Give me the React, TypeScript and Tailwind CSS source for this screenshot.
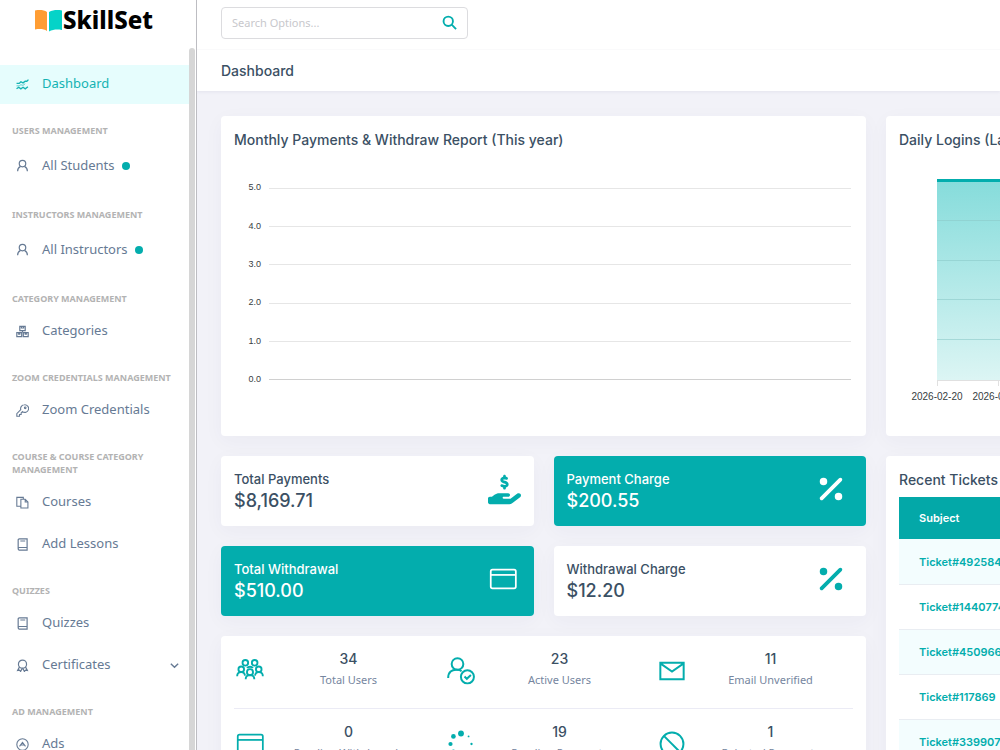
import type { ReactNode } from 'react'
import { FaHandHoldingDollar, FaPercent } from 'react-icons/fa6'

type IconProps = { children: ReactNode; size?: number; width?: number }

// all outline icons share a 24 unit grid
function Icon({ children, size = 13, width = 2 }: IconProps) {
  return (
    <svg
      width={size}
      height={size}
      viewBox="0 0 24 24"
      fill="none"
      stroke="currentColor"
      strokeWidth={width}
      className="shrink-0"
      aria-hidden="true"
    >
      {children}
    </svg>
  )
}

const icons = {
  dashboard: (
    <Icon width={2.4}>
      <path d="M1 10h5l3-3 4 2 4-3h3l3-3M1 20l4-3 4 3 4-3 4 3 5-4" />
      <path d="M1 14.500h5l3-2 4 1 4-3" strokeWidth="1.200" />
    </Icon>
  ),
  user: (
    <Icon width={2.2}>
      <circle cx="12" cy="8.500" r="6" />
      <path d="M3 22.500c0-5 2.500-7.500 5-8.500M21 22.500c0-5-2.500-7.500-5-8.500" />
    </Icon>
  ),
  categories: (
    <Icon width={2.2}>
      <path d="M7 2.500h10v8H7zM1.500 14h9v7.500h-9zM13.500 14h9v7.500h-9zM12 10.500V14M10 2.500v3h4v-3M5 14v3h2v-3M17 14v3h2v-3" />
    </Icon>
  ),
  key: (
    <Icon>
      <path d="M15.500 1.500a7 7 0 0 0-6.700 9L1.500 17.800v4.700h5v-3h3v-3l2.500-2.500a7 7 0 1 0 3.500-12.500z" />
      <circle cx="17" cy="7" r="1.500" />
    </Icon>
  ),
  courses: (
    <Icon>
      <path d="M9 19H1.500V2.500h12V6M9 6h8l5 5v11H9zM17 6v5h5" />
    </Icon>
  ),
  book: (
    <Icon width={2.2}>
      <path d="M4 19.500V3.500a2 2 0 0 1 2-2h14.500v21H6a3 3 0 0 1-2-3 2.500 2.500 0 0 1 2-2h14.500M8 5.500h9" />
    </Icon>
  ),
  certificate: (
    <Icon width={2.2}>
      <circle cx="12" cy="9.500" r="7.500" />
      <path d="M6.500 14.500L3 21l3.500-.5L8.500 23l3-6M17.500 14.500L21 21l-3.500-.5-2 2.500-3-6" />
    </Icon>
  ),
  ads: (
    <Icon>
      <circle cx="12" cy="12" r="10.500" />
      <path d="M6.500 15.500L12 8l5.500 7.500M9 13h6" />
    </Icon>
  ),
}

type MenuItem = { label: string; icon: keyof typeof icons; dot?: boolean; open?: boolean }

const menu: { title: string; items: MenuItem[] }[] = [
  { title: 'Users Management', items: [{ label: 'All Students', icon: 'user', dot: true }] },
  { title: 'Instructors Management', items: [{ label: 'All Instructors', icon: 'user', dot: true }] },
  { title: 'Category Management', items: [{ label: 'Categories', icon: 'categories' }] },
  { title: 'Zoom Credentials Management', items: [{ label: 'Zoom Credentials', icon: 'key' }] },
  {
    title: 'Course & Course Category Management',
    items: [
      { label: 'Courses', icon: 'courses' },
      { label: 'Add Lessons', icon: 'book' },
    ],
  },
  {
    title: 'Quizzes',
    items: [
      { label: 'Quizzes', icon: 'book' },
      { label: 'Certificates', icon: 'certificate', open: true },
    ],
  },
  { title: 'Ad Management', items: [{ label: 'Ads', icon: 'ads' }] },
]

function Sidebar() {
  return (
    <aside className="flex w-[197px] shrink-0 flex-col overflow-hidden border-r border-[#bdbdc2] bg-white font-['Noto_Sans',sans-serif]">
      <a href="#" className="flex h-12 shrink-0 items-start justify-center pt-1 pr-2 text-black">
        <svg width="27" height="24" viewBox="0 0 27 24" className="mt-1" aria-hidden="true">
          <path d="M0 2.500c5-1 9-.5 12 1.500V23c-3-2-7-2.500-12-1.500z" fill="#ff9d33" />
          <path d="M27 2.500c-5-1-9-.5-13 1.500V23.500c4-2 8-2.500 13-1.500z" fill="#05d3c8" />
        </svg>
        <span className="ml-px text-[24px] leading-8 font-extrabold">SkillSet</span>
      </a>
      <div className="flex min-h-0 flex-1">
        <nav className="min-w-0 flex-1 pt-[17px]">
          <a
            href="#"
            className="flex h-[39px] items-center gap-[13px] bg-[#e6fdfd] pb-px pl-4 text-[13px] text-[#14b3b3]"
          >
            {icons.dashboard}
            Dashboard
          </a>
          {menu.map((group) => (
            <section key={group.title}>
              <h2 className="mt-5 mb-1 pr-4 pl-3 text-[9px] leading-[13px] font-bold text-[#b3b3b3] uppercase">
                {group.title}
              </h2>
              {group.items.map((item) => (
                <a
                  key={item.label}
                  href="#"
                  className={`flex items-center gap-[13px] pt-[2px] pr-[9px] pl-4 text-[13px] text-[#667a94] ${item.dot ? 'h-[47px]' : 'h-[42px]'}`}
                >
                  {icons[item.icon]}
                  <span>{item.label}</span>
                  {item.dot && <span className="-ml-[6px] size-2 rounded-full bg-[#03adad]" />}
                  {item.open && (
                    <span className="ml-auto">
                      <Icon size={11} width={3}>
                        <path d="M4 8l8 8 8-8" />
                      </Icon>
                    </span>
                  )}
                </a>
              ))}
            </section>
          ))}
        </nav>
        <div className="mr-px w-[6px] rounded-t-full bg-[#d6d6d6]" />
      </div>
    </aside>
  )
}

function Header() {
  return (
    <header className="bg-white shadow-[0_1px_3px_rgba(60,60,110,0.08)]">
      <div className="flex h-[50px] items-center border-b border-[#fafafb] px-6 pb-1">
        <form className="flex h-8 w-[247px] items-center rounded border border-[#dcdcdf] px-[10px]">
          <label htmlFor="search" className="sr-only">
            Search
          </label>
          <input
            id="search"
            type="text"
            placeholder="Search Options..."
            className="h-full min-w-0 flex-1 font-['Noto_Sans',sans-serif] text-[11px] outline-none placeholder:text-[#c8c8cc]"
          />
          <button type="button" aria-label="Search" className="text-[#03adad]">
            <Icon size={15} width={3}>
              <circle cx="10" cy="10" r="7.500" />
              <path d="M15.500 15.500L22.500 22.500" />
            </Icon>
          </button>
        </form>
      </div>
      <h1 className="px-6 text-[14px] leading-[41px] font-medium">Dashboard</h1>
    </header>
  )
}

function PaymentsChart() {
  return (
    <div className="mt-[17px] grid h-[230px] grid-rows-6 pr-[2px] pl-3 font-['Liberation_Sans',sans-serif] text-[9px] text-[#373d3f]">
      {['5.0', '4.0', '3.0', '2.0', '1.0', '0.0'].map((tick) => (
        <div key={tick} className="flex items-center gap-2">
          <span className="w-[15px] text-right">{tick}</span>
          <span className={`flex-1 border-t ${tick === '0.0' ? 'border-[#d0d0d0]' : 'border-[#e6e6e6]'}`} />
        </div>
      ))}
    </div>
  )
}

function LoginsChart() {
  return (
    <svg width="286" height="230" className="mt-[26px]" aria-label="Daily logins">
      <defs>
        <linearGradient id="fill" x1="0" y1="0" x2="0" y2="1">
          <stop offset="0" stopColor="#86dcdb" />
          <stop offset="1" stopColor="#dcf5f4" />
        </linearGradient>
      </defs>
      <rect x="38" y="3" width="248" height="199" fill="url(#fill)" />
      <path d="M38 42.500h248M38 82.500h248M38 121.500h248M38 161.500h248" stroke="#8cc9c8" strokeOpacity=".6" />
      <path d="M38 202.500h248M38.500 203v5M99.500 203v5M160.500 203v5M221.500 203v5" stroke="#e0e0e0" />
      <path d="M38 2.500h248" stroke="#03adad" strokeWidth="3" />
      <g fill="#373d3f" fontFamily="Liberation Sans, sans-serif" fontSize="10" textAnchor="middle">
        <text x="38" y="222">2026-02-20</text>
        <text x="99" y="222">2026-02-21</text>
      </g>
    </svg>
  )
}

type StatProps = { label: string; value: string; filled?: boolean; children: ReactNode }

function Stat({ label, value, filled, children }: StatProps) {
  return (
    <div
      className={`flex h-[70px] items-center justify-between rounded px-[13px] shadow-[0_5px_20px_rgba(60,60,110,0.04)] ${filled ? 'bg-[#03adad] text-white' : 'bg-white'}`}
    >
      <div>
        <p className="text-[13px] leading-5 font-medium">{label}</p>
        <p className="text-[18px] leading-6 font-medium">{value}</p>
      </div>
      <div className={filled ? 'pb-1' : 'pb-1 text-[#03adad]'}>{children}</div>
    </div>
  )
}

const cardIcon = (
  <Icon size={28} width={1.5}>
    <rect x="1.500" y="4" width="21.500" height="16" rx="1.500" />
    <path d="M1.500 8.500h21.500" />
  </Icon>
)

const spinnerDots = [
  [12, 3, 2.5],
  [5.5, 5.5, 2],
  [3, 12, 1.8],
  [5.5, 18.5, 1.8],
  [12, 21, 1.5],
  [18.5, 18.5, 1.2],
  [21, 12, 1],
  [18.5, 5.5, 0.8],
]

const summary: { value: string; label: string; icon: ReactNode }[][] = [
  [
    {
      value: '34',
      label: 'Total Users',
      icon: (
        <Icon size={28} width={1.6}>
          <circle cx="8" cy="5" r="2.400" />
          <circle cx="16" cy="5" r="2.400" />
          <circle cx="4.500" cy="10.500" r="2.400" />
          <circle cx="19.500" cy="10.500" r="2.400" />
          <circle cx="12" cy="13" r="2.600" />
          <path d="M1 16.500c0-2 1-3.500 3.500-3.500 2 0 3 1 3.200 3M23 16.500c0-2-1-3.500-3.500-3.500-2 0-3 1-3.200 3M8.300 19c0-2 1.200-3.500 3.700-3.500s3.700 1.500 3.700 3.500M9.500 9.500c1-1.500 4-1.500 5 0" />
        </Icon>
      ),
    },
    {
      value: '23',
      label: 'Active Users',
      icon: (
        <Icon size={28} width={1.7}>
          <circle cx="9" cy="6" r="5" />
          <circle cx="17.500" cy="17" r="5.600" />
          <path d="M1 18c0-5 3-7.500 8-7 1.500 0 2.500.5 3.500 1.300M15 16.700l2 2 3.500-3.200" />
        </Icon>
      ),
    },
    {
      value: '11',
      label: 'Email Unverified',
      icon: (
        <Icon size={28} width={1.7}>
          <path d="M2 5h20v14H2zM2 5.500l10 7 10-7" />
        </Icon>
      ),
    },
  ],
  [
    { value: '0', label: 'Pending Withdrawals', icon: cardIcon },
    {
      value: '19',
      label: 'Pending Payments',
      icon: (
        <Icon size={28} width={0}>
          {spinnerDots.map(([x, y, r]) => (
            <circle key={`${x}-${y}`} cx={x} cy={y} r={r} fill="currentColor" />
          ))}
        </Icon>
      ),
    },
    {
      value: '1',
      label: 'Rejected Payments',
      icon: (
        <Icon size={28} width={1.7}>
          <circle cx="12" cy="12" r="9.800" />
          <path d="M5 5l14 14" />
        </Icon>
      ),
    },
  ],
]

const tickets = ['492584', '1440774', '450966', '117869', '339907']

const card = 'rounded bg-white px-[13px] shadow-[0_5px_20px_rgba(60,60,110,0.04)]'

export default function App() {
  return (
    <div className="flex h-screen overflow-hidden bg-[#f2f2f8] font-['Inter',sans-serif] text-[#3b5064]">
      <Sidebar />
      <div className="min-w-0 flex-1 overflow-hidden">
        <Header />
        <main className="grid min-w-[1025px] grid-cols-[minmax(645px,2fr)_minmax(312px,1fr)] gap-5 px-6 pt-[25px]">
          <section className={`${card} h-[320px] pt-3`}>
            <h2 className="text-[14px] leading-6 font-medium">Monthly Payments &amp; Withdraw Report (This year)</h2>
            <PaymentsChart />
          </section>
          <section className={`${card} h-[320px] pt-3`}>
            <h2 className="text-[14px] leading-6 font-medium">Daily Logins (Last 10 days)</h2>
            <LoginsChart />
          </section>

          <div className="flex flex-col gap-5">
            <div className="grid grid-cols-2 gap-5">
              <Stat label="Total Payments" value="$8,169.71">
                <FaHandHoldingDollar size={33} />
              </Stat>
              <Stat label="Payment Charge" value="$200.55" filled>
                <FaPercent size={30} className="mr-[7px]" />
              </Stat>
              <Stat label="Total Withdrawal" value="$510.00" filled>
                <div className="mr-1">{cardIcon}</div>
              </Stat>
              <Stat label="Withdrawal Charge" value="$12.20">
                <FaPercent size={30} className="mr-[7px]" />
              </Stat>
            </div>
            <section className={card}>
              {summary.map((row) => (
                <div
                  key={row[0].label}
                  className="grid grid-cols-3 gap-[14px] border-b border-[#ebebf5] pt-[11px] pb-[19px]"
                >
                  {row.map((entry) => (
                    <div key={entry.label} className="flex items-center">
                      <span className="flex w-8 justify-center pt-[5px] text-[#03adad]">{entry.icon}</span>
                      <div className="flex-1 text-center">
                        <p className="text-[14px] leading-6 font-medium">{entry.value}</p>
                        <p className="font-['Noto_Sans',sans-serif] text-[11px] leading-[18px] text-[#7686a0]">
                          {entry.label}
                        </p>
                      </div>
                    </div>
                  ))}
                </div>
              ))}
            </section>
          </div>

          <section className={`${card} pt-3`}>
            <h2 className="text-[14px] leading-6 font-medium">Recent Tickets</h2>
            <table className="mt-[5px] w-full text-left text-[11px]">
              <thead>
                <tr className="h-[42px] bg-[#03a8a8] text-white">
                  <th className="pl-5 font-semibold">Subject</th>
                </tr>
              </thead>
              <tbody>
                {tickets.map((id) => (
                  <tr key={id} className="h-[45px] border-b border-[#e9edf2] odd:bg-[#f3fdfe]">
                    <td className="pt-[2px] pl-5">
                      <a href="#" className="font-semibold text-[#03adad]">
                        Ticket#{id}
                      </a>
                    </td>
                  </tr>
                ))}
              </tbody>
            </table>
          </section>
        </main>
      </div>
    </div>
  )
}
